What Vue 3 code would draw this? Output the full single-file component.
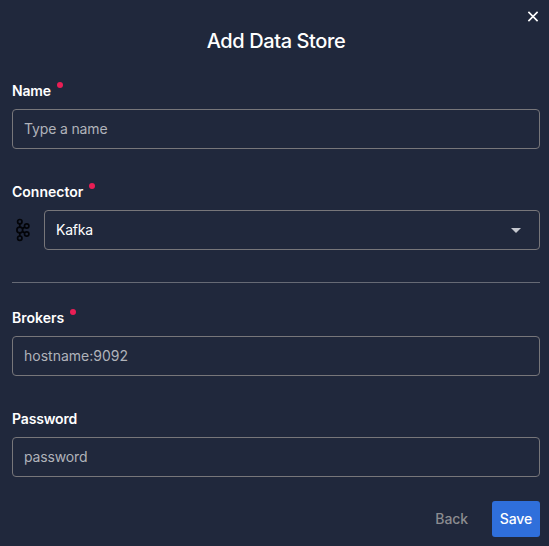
<script setup>
import { ref } from 'vue'

const name = ref('')
const brokers = ref('')
const password = ref('')
</script>

<template>
  <form class="dialog" @submit.prevent>
    <button class="close" type="button" aria-label="Close">
      <svg width="12" height="12" viewBox="0 0 12 12"><path d="M1.4 1.9 10.6 11.1M10.6 1.9 1.4 11.1" /></svg>
    </button>
    <h1 class="title">Add Data Store</h1>

    <div class="field">
      <label class="label name" for="name">Name<i class="dot"></i></label>
      <input id="name" v-model="name" class="box type-name" placeholder="Type a name" />
    </div>

    <div class="field">
      <div class="label connector">Connector<i class="dot"></i></div>
      <div class="row">
        <svg class="kafka" width="16" height="24" viewBox="0 0 16 24">
          <path d="M4.8 5.5v4M4.8 14.5v4M7.5 10.5l2.5-1.5M7.5 13.5l2.5 1.5" />
          <circle cx="4.8" cy="3.7" r="2.2" />
          <circle cx="4.8" cy="12" r="2.9" />
          <circle cx="4.8" cy="20.2" r="2.2" />
          <circle cx="11.7" cy="8" r="2.2" />
          <circle cx="11.7" cy="16" r="2.2" />
        </svg>
        <div class="box select">
          <span>Kafka</span>
          <svg width="10" height="5" viewBox="0 0 10 5"><path d="M0 0h10L5 5z" /></svg>
        </div>
      </div>
    </div>

    <hr class="divider" />

    <div class="field">
      <label class="label brokers" for="brokers">Brokers<i class="dot"></i></label>
      <input id="brokers" v-model="brokers" class="box host" placeholder="hostname:9092" />
    </div>

    <div class="field">
      <label class="label pw" for="password">Password</label>
      <input id="password" v-model="password" class="box pass" placeholder="password" />
    </div>

    <div class="actions">
      <button class="btn back" type="button">Back</button>
      <button class="btn save" type="submit">Save</button>
    </div>
  </form>
</template>

<style>
body {
  background: #20283c;
}
</style>

<style scoped>
.dialog {
  box-sizing: border-box;
  height: 546px;
  padding: 10px 9px 9px 12px;
  display: flex;
  flex-direction: column;
  background: #20283c;
  color: #fff;
  font: 14px/20px Inter, "Liberation Sans", sans-serif;
  overflow: hidden;
}
button {
  font: inherit;
  border: 0;
  background: none;
  padding: 0;
}
.close {
  align-self: flex-end;
  display: flex;
  width: 12px;
  height: 12px;
  margin-right: 1px;
}
.close svg {
  fill: none;
  stroke: #fff;
  stroke-width: 1.6;
}
.title {
  margin: 5px 0 26px;
  font-size: 20px;
  line-height: 28px;
  font-weight: 550;
  letter-spacing: -0.4px;
  text-align: center;
}
.field {
  height: 68px;
  margin-bottom: 33px;
  flex: none;
}
.label {
  display: flex;
  height: 28px;
  font-weight: 600;
}
.name,
.pw {
  letter-spacing: -0.15px;
}
.dot {
  width: 6px;
  height: 6px;
  margin: 1px 0 0 6px;
  border-radius: 50%;
  background: #e91e55;
}
.box {
  display: block;
  box-sizing: border-box;
  width: 100%;
  height: 40px;
  padding: 0 11px 2px;
  border: 1px solid #77767a;
  border-radius: 4px;
  background: transparent;
  color: #fff;
  font: inherit;
}
.type-name,
.pass {
  letter-spacing: -0.15px;
}
.box::placeholder {
  color: #b0b3ba;
  opacity: 1;
}
.row {
  display: flex;
  align-items: center;
}
.kafka {
  flex: none;
  margin: 0 13px 0 3px;
  fill: none;
  stroke: #030408;
  stroke-width: 1.7;
}
.select {
  display: flex;
  align-items: center;
  justify-content: space-between;
  padding-right: 18px;
  padding-bottom: 0;
  letter-spacing: -0.25px;
}
.select svg {
  fill: #c5c8cf;
}
.divider {
  width: 100%;
  height: 1px;
  margin: -1px 0 25px;
  border: 0;
  background: #666a75;
  flex: none;
}
.actions {
  display: flex;
  justify-content: flex-end;
  gap: 24px;
  margin-top: -9px;
}
.btn {
  height: 36px;
  font-weight: 500;
  letter-spacing: -0.1px;
}
.back {
  color: #8b8c90;
}
.save {
  width: 48px;
  border-radius: 3px;
  background: #2f6fdb;
  color: #fff;
}
</style>
